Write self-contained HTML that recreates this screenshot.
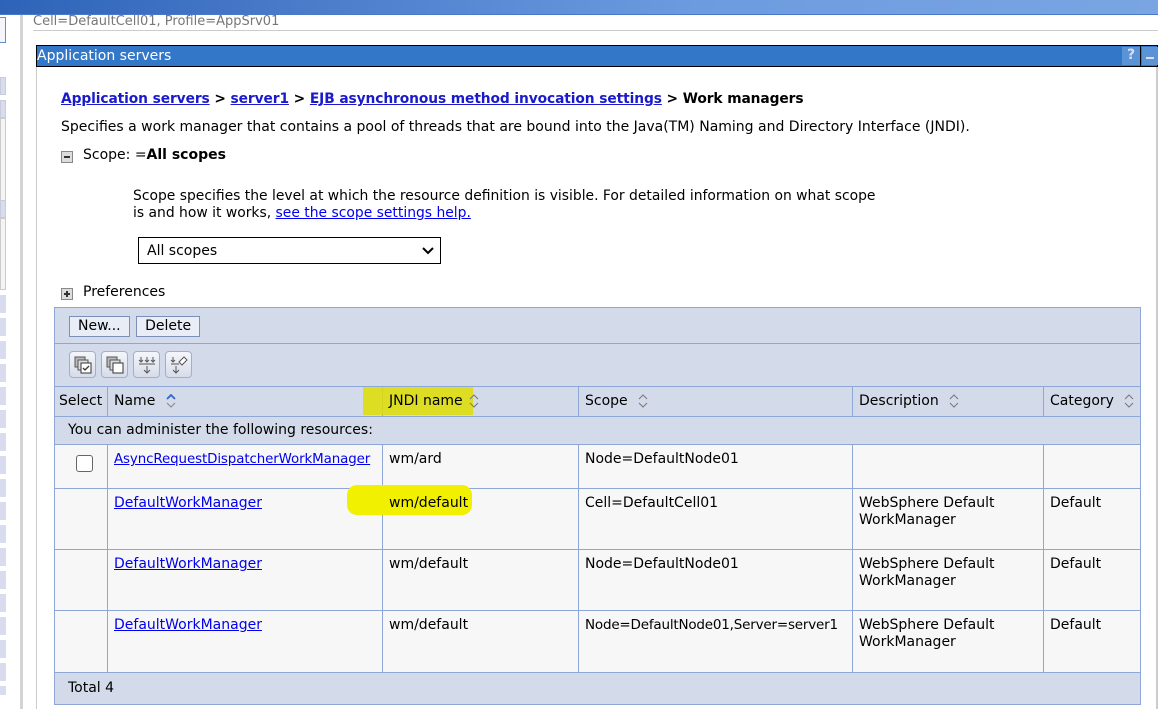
<!DOCTYPE html>
<html><head><meta charset="utf-8"><style>
*{margin:0;padding:0;box-sizing:border-box}
body{width:1158px;height:709px;overflow:hidden;background:#fff;font-family:"DejaVu Sans",Verdana,sans-serif;font-size:14px;color:#000;position:relative}
.a{position:absolute;white-space:nowrap}
a{color:#0000ee;text-decoration:underline}
.bc a{color:#1a1acc;font-weight:bold}
table{position:absolute;left:54px;top:307px;width:1087px;border-collapse:collapse;background:#d3dae9;font-size:14px;table-layout:fixed}
td{border:1px solid #8ea7d6;vertical-align:top;padding:6px 6px 0;line-height:17px;overflow:hidden;white-space:nowrap}
tr.r td{background:#f7f7f7}
.btn{display:inline-block;border:1px solid #7b8fb8;background:#e8edf6;padding:0 8px;margin-right:2px;line-height:19px}
.ib{display:inline-block;width:27px;height:27px;border:1px solid #9fb0cc;border-radius:4px;background:linear-gradient(#f4f6fa,#d6dde9);margin-right:5px;vertical-align:middle;position:relative}
.ib svg{position:absolute;left:4px;top:4px}
.cb{display:inline-block;width:17px;height:17px;border:1.5px solid #666;border-radius:3px;background:#fff;margin:4px 0 0 15px}
.s{display:inline-block;vertical-align:middle;margin-left:6px}
</style></head><body>
<div class="a" style="left:0;top:0;width:1158px;height:15px;background:linear-gradient(90deg,#2e63b8,#6c9be0 60%,#7aa5e2);border-bottom:1px solid #4a78c8"></div>
<div class="a" style="left:0;top:17px;width:6px;height:26px;border:1px solid #6a8bc8;border-left:none;background:#f4f6fb"></div>
<div class="a" style="left:0;top:77px;width:6px;height:18px;background:#d8dcee;border:1px solid #c8ccd8"></div>
<div class="a" style="left:0;top:100px;width:6px;height:18px;background:#d8dcee;border:1px solid #c8ccd8"></div>
<div class="a" style="left:0;top:118px;width:6px;height:85px;background:#f4f4f4;border:1px solid #ccc"></div>
<div class="a" style="left:0;top:200px;width:6px;height:18px;background:#d8dcee;border:1px solid #c8ccd8"></div>
<div class="a" style="left:0;top:218px;width:6px;height:72px;background:#f4f4f4;border:1px solid #ccc"></div>
<div class="a" style="left:0;top:295px;width:6px;height:400px;background:repeating-linear-gradient(#d8dcee 0 18px,#fff 18px 23px)"></div>
<div class="a" style="left:20px;top:15px;width:3px;height:694px;background:#d4d4d4"></div>
<div class="a" style="left:33px;top:14px;font-size:13px;color:#777">Cell=DefaultCell01, Profile=AppSrv01</div>
<div class="a" style="left:33px;top:30px;width:1125px;height:1px;background:#ccc"></div>
<div class="a" style="left:36px;top:45px;width:1122px;height:22px;background:#3277c8;border:1px solid #000;color:#fff;padding:2px 0 0 0;font-size:14px">Application servers
<div class="a" style="left:1085px;top:1px;width:18px;height:18px;background:#5a93d6;color:#dde;font-weight:bold;text-align:center;font-size:14px">?</div>
<div class="a" style="left:1103px;top:-1px;width:1px;height:22px;background:#000"></div>
<div class="a" style="left:1105px;top:1px;width:16px;height:18px;background:#5a93d6"><div style="margin:10px 4px 0;height:2px;background:#dde"></div></div>
</div>
<div class="a" style="left:36px;top:67px;width:1px;height:642px;background:#ccc"></div>
<div class="a" style="left:1156px;top:67px;width:2px;height:642px;background:#ccc"></div>
<div class="a bc" style="left:61px;top:91px;font-weight:bold;font-size:13.8px;letter-spacing:-0.1px"><a>Application servers</a> &gt; <a>server1</a> &gt; <a>EJB asynchronous method invocation settings</a> &gt; Work managers</div>
<div class="a" style="left:61px;top:119px;font-size:14px">Specifies a work manager that contains a pool of threads that are bound into the Java(TM) Naming and Directory Interface (JNDI).</div>
<div class="a" style="left:61px;top:151px;width:12px;height:12px;border:1px solid #888;background:#ddd"><div style="margin:4px 2px 0;height:2px;background:#333"></div></div>
<div class="a" style="left:83px;top:147px">Scope: =<b>All scopes</b></div>
<div class="a" style="left:133px;top:188px;line-height:17px;font-size:13.9px">Scope specifies the level at which the resource definition is visible. For detailed information on what scope<br>is and how it works, <a>see the scope settings help.</a></div>
<div class="a" style="left:138px;top:237px;width:303px;height:27px;border:1px solid #000;padding:5px 8px">All scopes<svg style="position:absolute;right:6px;top:9px" width="12" height="8"><path d="M1 1l5 5 5-5" stroke="#000" stroke-width="2" fill="none"/></svg></div>
<div class="a" style="left:61px;top:288px;width:12px;height:12px;border:1px solid #888;background:#ddd"><div style="position:absolute;left:2px;top:4px;width:6px;height:2px;background:#333"></div><div style="position:absolute;left:4px;top:2px;width:2px;height:6px;background:#333"></div></div>
<div class="a" style="left:83px;top:284px">Preferences</div>
<table>
<colgroup><col style="width:53px"><col style="width:275px"><col style="width:196px"><col style="width:274px"><col style="width:191px"><col></colgroup>
<tr style="height:36px"><td colspan="6" style="padding:8px 14px 0"><span class="btn">New...</span> <span class="btn">Delete</span></td></tr>
<tr style="height:43px"><td colspan="6" style="padding:7px 14px 0"><span class="ib"><svg width="18" height="18"><rect x="1" y="1" width="10" height="10" fill="#bbb" stroke="#555"/><rect x="4" y="4" width="10" height="10" fill="#ddd" stroke="#555"/><rect x="7" y="7" width="10" height="10" fill="#fff" stroke="#333"/><path d="M9 12l2 2 4-4" stroke="#333" fill="none" stroke-width="1.3"/></svg></span><span class="ib"><svg width="18" height="18"><rect x="1" y="1" width="10" height="10" fill="#bbb" stroke="#555"/><rect x="4" y="4" width="10" height="10" fill="#ddd" stroke="#555"/><rect x="7" y="7" width="10" height="10" fill="#fff" stroke="#333"/></svg></span><span class="ib"><svg width="18" height="18" stroke="#555" fill="none"><path d="M3 1v5M1 4l2 2 2-2M9 1v5M7 4l2 2 2-2M15 1v5M13 4l2 2 2-2M1 8h16M9 10v7M6 14l3 3 3-3"/></svg></span><span class="ib"><svg width="18" height="18" stroke="#555" fill="none"><path d="M3 1v5M1 4l2 2 2-2M1 8h8M6 10v7M3 14l3 3 3-3"/><path d="M9 6l5-5 3 3-5 5z" fill="#fff"/></svg></span></td></tr>
<tr style="height:30px"><td style="padding:6px 4px 0">Select</td><td>Name <svg class="s" width="10" height="14"><path d="M1 5l4-4 4 4" stroke="#36c" stroke-width="1.8" fill="none"/><path d="M1 9l4 4 4-4" stroke="#888" fill="none"/></svg></td><td style="position:relative;overflow:visible"><div style="position:absolute;left:-20px;top:0;width:110px;height:28px;background:#dede00;opacity:.85"></div><span style="position:relative">JNDI name</span><svg class="s" style="position:relative" width="10" height="14"><path d="M1 5l4-4 4 4M1 9l4 4 4-4" stroke="#777" fill="none"/></svg></td><td>Scope <svg class="s" width="10" height="14"><path d="M1 5l4-4 4 4M1 9l4 4 4-4" stroke="#777" fill="none"/></svg></td><td>Description <svg class="s" width="10" height="14"><path d="M1 5l4-4 4 4M1 9l4 4 4-4" stroke="#777" fill="none"/></svg></td><td>Category <svg class="s" width="10" height="14"><path d="M1 5l4-4 4 4M1 9l4 4 4-4" stroke="#777" fill="none"/></svg></td></tr>
<tr style="height:28px"><td colspan="6" style="padding:5px 13px 0">You can administer the following resources:</td></tr>
<tr class="r" style="height:44px"><td><span class="cb"></span></td><td style="font-size:13.4px;letter-spacing:-0.1px"><a>AsyncRequestDispatcherWorkManager</a></td><td>wm/ard</td><td>Node=DefaultNode01</td><td></td><td></td></tr>
<tr class="r" style="height:61px"><td></td><td><a>DefaultWorkManager</a></td><td style="position:relative;overflow:visible"><div style="position:absolute;left:-36px;top:-4px;width:125px;height:30px;background:#f0f000;border-radius:10px"></div><span style="position:relative">wm/default</span></td><td>Cell=DefaultCell01</td><td>WebSphere Default<br>WorkManager</td><td>Default</td></tr>
<tr class="r" style="height:61px"><td></td><td><a>DefaultWorkManager</a></td><td>wm/default</td><td>Node=DefaultNode01</td><td>WebSphere Default<br>WorkManager</td><td>Default</td></tr>
<tr class="r" style="height:62px"><td></td><td><a>DefaultWorkManager</a></td><td>wm/default</td><td style="font-size:13.5px;letter-spacing:-0.2px">Node=DefaultNode01,Server=server1</td><td>WebSphere Default<br>WorkManager</td><td>Default</td></tr>
<tr style="height:32px"><td colspan="6" style="padding:7px 13px 0">Total 4</td></tr>
</table>
</body></html>
